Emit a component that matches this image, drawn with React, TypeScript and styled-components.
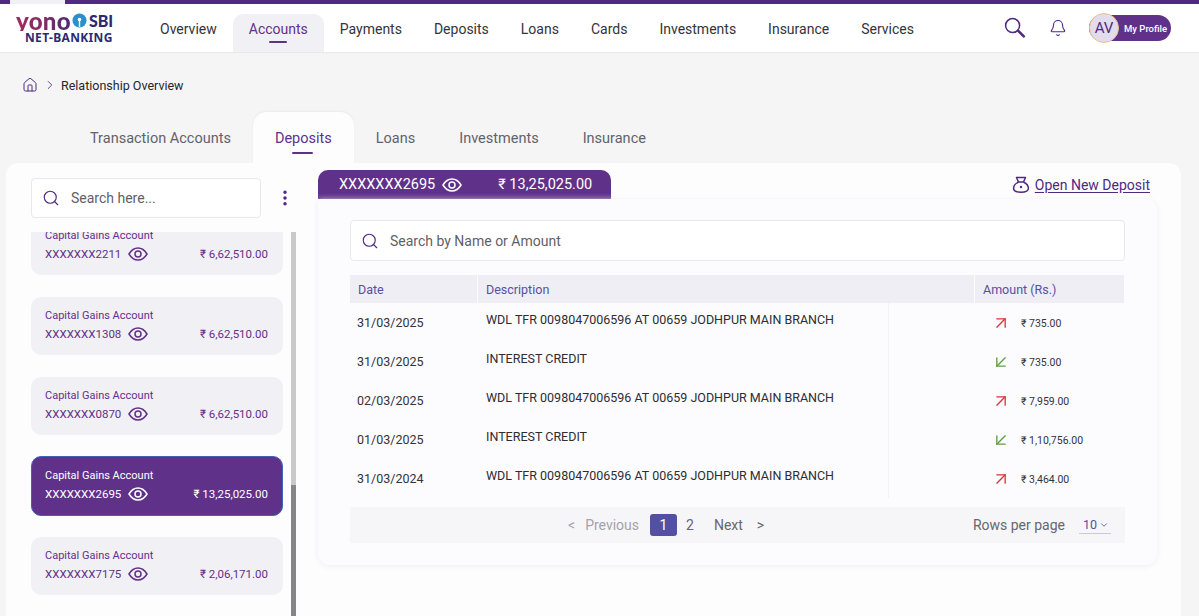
import React from "react"
import styled, { createGlobalStyle } from "styled-components"
import {
  ArrowDownLeft,
  ArrowUpRight,
  Bell,
  ChevronDown,
  ChevronRight,
  EllipsisVertical,
  House,
  Search,
} from "lucide-react"

const purple = "#5f3189"
const deepPurple = "#4f2a80"

const GlobalStyle = createGlobalStyle`
  html, body {
    margin: 0;
    height: 100%;
    overflow: hidden;
    background: #f5f5f6;
    font-family: Roboto, "Noto Sans", sans-serif;
    color: #2b2b33;
  }
  * { box-sizing: border-box; }
`

const Page = styled.div`
  height: 100vh;
  display: flex;
  flex-direction: column;
  overflow: hidden;
`

const TopStrip = styled.div`
  height: 4px;
  flex: none;
  background: ${deepPurple};
  padding-left: 10px;

  &::before {
    content: "";
    display: block;
    width: 55px;
    height: 4px;
    background: #f1f0f4;
  }
`

const Header = styled.header`
  height: 48px;
  flex: none;
  display: flex;
  align-items: flex-end;
  background: #fff;
  padding: 0 28px 0 16px;
  box-shadow: 0 1px 1px #e9e9ec;
`

const Logo = styled.div`
  width: 128px;
  align-self: center;
  display: flex;
  flex-direction: column;
  margin-top: -1px;
`

const LogoTop = styled.div`
  display: flex;
  align-items: center;
  height: 21px;
`

const Yono = styled.span`
  font-family: Lato, sans-serif;
  font-weight: 900;
  font-size: 24px;
  line-height: 21px;
  letter-spacing: 0.3px;
  background: linear-gradient(90deg, #a12c5c 0%, #7d2c68 55%, #4a2a78 100%);
  -webkit-background-clip: text;
  background-clip: text;
  color: transparent;
`

const Sbi = styled.span`
  font-family: Lato, sans-serif;
  font-weight: 900;
  font-size: 16px;
  color: #2c2a72;
  margin-left: 1px;
`

const NetBanking = styled.span`
  font-family: "Noto Sans", sans-serif;
  font-weight: 700;
  font-size: 12px;
  line-height: 14px;
  letter-spacing: 0.35px;
  color: #2c2a72;
  margin-left: 9px;
`

const Nav = styled.nav`
  display: flex;
  height: 38px;
`

const NavItem = styled.a<{ $active?: boolean }>`
  position: relative;
  display: flex;
  align-items: center;
  padding: 0 16px 8px;
  font-size: 14px;
  color: ${(p) => (p.$active ? purple : "#33333b")};
  background: ${(p) => (p.$active ? "#f1f0f5" : "transparent")};
  border-radius: 10px 10px 0 0;

  ${(p) =>
    p.$active &&
    `&::after {
      content: "";
      position: absolute;
      left: 36px;
      bottom: 9px;
      width: 18px;
      height: 2px;
      border-radius: 1px;
      background: ${purple};
    }`}
`

const HeaderTools = styled.div`
  margin-left: auto;
  align-self: center;
  display: flex;
  align-items: center;
`

const BellIcon = styled(Bell)`
  margin-left: 23px;
  color: ${deepPurple};
`

const Profile = styled.div`
  margin-left: 22px;
  display: flex;
  align-items: center;
  width: 82px;
  height: 26px;
  border-radius: 13px;
  background: ${purple};
`

const Avatar = styled.div`
  width: 30px;
  height: 30px;
  flex: none;
  border-radius: 50%;
  border: 1px solid #e3c48f;
  background: #e2dcec;
  color: ${deepPurple};
  font-size: 15px;
  display: flex;
  align-items: center;
  justify-content: center;
`

const ProfileLabel = styled.span`
  margin-left: 5px;
  font-size: 9.5px;
  font-weight: 500;
  color: #fff;
  white-space: nowrap;
`

const Breadcrumb = styled.div`
  height: 60px;
  flex: none;
  display: flex;
  align-items: center;
  padding: 6px 0 0 22px;
  font-size: 12.5px;
  color: #26262c;
`

const Crumb = styled.span`
  margin-left: 4px;
`

const TabBar = styled.div`
  display: flex;
  height: 51px;
  flex: none;
  padding-left: 68px;
`

const Tab = styled.a<{ $active?: boolean }>`
  position: relative;
  display: flex;
  align-items: center;
  padding: 2px 22px 0;
  font-size: 14.5px;
  color: ${(p) => (p.$active ? purple : "#62626a")};
  background: ${(p) => (p.$active ? "#fdfdfe" : "transparent")};
  border-radius: 14px 14px 0 0;
  box-shadow: ${(p) => (p.$active ? "0 -1px 2px #ebebee" : "none")};

  ${(p) =>
    p.$active &&
    `&::after {
      content: "";
      position: absolute;
      left: 39px;
      bottom: 9px;
      width: 21px;
      height: 2px;
      border-radius: 1px;
      background: ${purple};
    }`}
`

const Panel = styled.main`
  flex: 1;
  min-height: 0;
  margin: 0 18px 0 6px;
  background: #fdfdfe;
  border-radius: 12px 12px 0 0;
  display: flex;
`

const Sidebar = styled.aside`
  width: 312px;
  flex: none;
  display: flex;
  flex-direction: column;
  padding: 15px 0 0 25px;
`

const SearchRow = styled.div`
  display: flex;
  align-items: center;
  height: 40px;
  flex: none;
`

const SearchBox = styled.div<{ $wide?: boolean }>`
  display: flex;
  align-items: center;
  height: ${(p) => (p.$wide ? "41px" : "40px")};
  width: ${(p) => (p.$wide ? "775px" : "230px")};
  padding-left: 10px;
  background: #fff;
  border: 1px solid #e8e8ee;
  border-radius: 4px;
  font-size: 14px;
  color: #5f5f66;
`

const SearchText = styled.span`
  margin-left: 11px;
`

const SearchGlyph = styled(Search)`
  color: ${deepPurple};
  flex: none;
`

const MoreIcon = styled(EllipsisVertical)`
  margin-left: 14px;
  color: ${deepPurple};
`

const ListArea = styled.div`
  flex: 1;
  min-height: 0;
  display: flex;
  margin-top: 14px;
`

const ListClip = styled.div`
  width: 252px;
  flex: none;
  overflow: hidden;
`

const CardList = styled.div`
  display: flex;
  flex-direction: column;
  gap: 22px;
  margin-top: -15px;
`

const AccountCard = styled.div<{ $active?: boolean }>`
  height: ${(p) => (p.$active ? "60px" : "58px")};
  margin: ${(p) => (p.$active ? "-1px 0" : "0")};
  padding: ${(p) => (p.$active ? "12px 14px 0 13px" : "12px 15px 0 14px")};
  flex: none;
  border-radius: 10px;
  background: ${(p) => (p.$active ? purple : "#f1f0f5")};
  border: ${(p) => (p.$active ? "1.5px solid #3f63bb" : "none")};
  color: ${(p) => (p.$active ? "#fff" : purple)};
`

const CardTitle = styled.div`
  font-size: 11px;
  line-height: 13px;
`

const CardRow = styled.div`
  display: flex;
  align-items: center;
  margin-top: 4px;
  font-size: 11.5px;
  line-height: 16px;
`

const CardEye = styled.svg`
  width: 20px;
  height: 14px;
  margin-left: 7px;
`

const CardAmount = styled.span`
  margin-left: auto;
`

const ScrollTrack = styled.div`
  width: 5px;
  margin-left: 8px;
  flex: none;
  display: flex;
  flex-direction: column;
  background: #c9c9cc;
`

const ScrollThumb = styled.div`
  margin-top: 253px;
  flex: 1;
  background: #85858a;
`

const Detail = styled.section`
  width: 839px;
  flex: none;
  display: flex;
  flex-direction: column;
  padding-top: 7px;
`

const DetailTop = styled.div`
  display: flex;
  align-items: flex-start;
  height: 29px;
  flex: none;
`

const AccountTab = styled.div`
  width: 293px;
  height: 29px;
  display: flex;
  align-items: center;
  padding-left: 21px;
  background: ${purple};
  border-radius: 10px 10px 0 0;
  color: #fff;
  font-size: 14.5px;
`

const AccountTabAmount = styled.span`
  margin-left: 36px;
`

const OpenDeposit = styled.a`
  margin-left: auto;
  margin-right: 7px;
  display: flex;
  align-items: center;
  height: 29px;
  gap: 5px;
  font-size: 14px;
  color: ${deepPurple};
  text-decoration: underline;
  text-underline-offset: 2px;
`

const DetailCard = styled.div`
  height: 366px;
  flex: none;
  padding: 21px 32px 0;
  border-radius: 0 12px 12px 12px;
  background: #fcfcfe;
  box-shadow: 0 1px 6px #efeff2;
`

const TableHead = styled.div`
  margin-top: 14px;
  height: 28px;
  display: grid;
  grid-template-columns: 127px 496px 149px;
  gap: 1px;
`

const HeadCell = styled.div`
  display: flex;
  align-items: center;
  padding-left: 8px;
  background: #eeeef4;
  color: #57509f;
  font-size: 12.5px;
`

const TableRow = styled.div`
  height: 39px;
  display: grid;
  grid-template-columns: 128px 411px 86px 149px;
`

const DateCell = styled.div`
  padding: 12px 0 0 7px;
  font-size: 12.5px;
  line-height: 16px;
  color: #33333a;
`

const DescriptionCell = styled.div`
  padding: 9px 0 0 8px;
  font-size: 12.5px;
  line-height: 16px;
  color: #2d2d33;
  border-right: 1px solid #f3f3f6;
  white-space: nowrap;
`

const AmountCell = styled.div`
  grid-column: 4;
  display: flex;
  align-items: center;
  padding: 1px 0 0 16px;
  font-size: 10.5px;
  color: #33333a;
`

const AmountText = styled.span`
  margin-left: 10px;
`

const UpIcon = styled(ArrowUpRight)`
  color: #d8343b;
`

const DownIcon = styled(ArrowDownLeft)`
  color: #5f9e3f;
`

const Pager = styled.div`
  margin-top: 9px;
  height: 36px;
  display: flex;
  align-items: center;
  padding: 0 14px 0 218px;
  background: #f6f6f9;
  font-size: 14px;
  color: #66666e;
`

const PagerMuted = styled.span`
  color: #a3a3aa;
`

const PagerPrevious = styled(PagerMuted)`
  margin-left: 10px;
`

const PageBox = styled.span`
  margin-left: 11px;
  width: 27px;
  height: 22px;
  border-radius: 3px;
  background: #5350a3;
  color: #fff;
  display: flex;
  align-items: center;
  justify-content: center;
`

const PageNumber = styled.span`
  margin-left: 9px;
`

const PagerNext = styled.span`
  margin-left: 20px;
`

const PagerArrow = styled.span`
  margin-left: 14px;
`

const RowsLabel = styled.span`
  margin-left: auto;
`

const RowsSelect = styled.span`
  margin-left: 14px;
  width: 32px;
  height: 18px;
  display: flex;
  align-items: center;
  padding-left: 4px;
  gap: 2px;
  font-size: 12.5px;
  color: #57509f;
  border-bottom: 1px solid #c9c8de;
`

const EyeIcon = () => (
  <CardEye viewBox="0 0 20 14" fill="none" stroke="currentColor" strokeWidth="1.5">
    <path d="M1 7C3.4 3 6.4 1 10 1s6.6 2 9 6c-2.4 4-5.4 6-9 6S3.4 11 1 7Z" />
    <circle cx="10" cy="7" r="3" />
  </CardEye>
)

const LogoMark = () => (
  <svg width="17" height="17" viewBox="0 0 17 17">
    <circle cx="8.5" cy="8.5" r="7" fill="#2b8fcb" />
    <circle cx="8.5" cy="7.5" r="1.8" fill="#fff" />
    <rect x="7.8" y="8" width="1.4" height="7" fill="#fff" />
  </svg>
)

const LoupeIcon = () => (
  <svg width="22" height="22" viewBox="0 0 22 22" fill="none" stroke={deepPurple}>
    <circle cx="8.6" cy="8.6" r="7" strokeWidth="1.5" />
    <path d="M14 13.6l5.8 5.8" strokeWidth="2.6" strokeLinecap="round" />
  </svg>
)

const MoneyBag = () => (
  <svg width="18" height="18" viewBox="0 0 18 18" fill="none" stroke={deepPurple} strokeWidth="1.5">
    <path d="M4.5 1.5h9L11.5 6h-5L4.5 1.5Z" strokeLinejoin="round" />
    <path d="M6.5 6C3.5 7.5 1.6 9.8 1.6 12.3c0 2.6 2.4 4 7.4 4s7.4-1.4 7.4-4C16.400 9.800 14.500 7.500 11.500 6" />
    <circle cx="9" cy="11" r="1.2" fill={deepPurple} stroke="none" />
  </svg>
)

const navItems = ["Overview", "Accounts", "Payments", "Deposits", "Loans", "Cards", "Investments", "Insurance", "Services"]
const tabs = ["Transaction Accounts", "Deposits", "Loans", "Investments", "Insurance"]

const accounts = [
  { number: "XXXXXXX2211", amount: "₹ 6,62,510.00" },
  { number: "XXXXXXX1308", amount: "₹ 6,62,510.00" },
  { number: "XXXXXXX0870", amount: "₹ 6,62,510.00" },
  { number: "XXXXXXX2695", amount: "₹ 13,25,025.00", active: true },
  { number: "XXXXXXX7175", amount: "₹ 2,06,171.00" },
]

const withdrawal = "WDL TFR 0098047006596 AT 00659 JODHPUR MAIN BRANCH"

const rows = [
  { date: "31/03/2025", text: withdrawal, amount: "₹ 735.00", out: true },
  { date: "31/03/2025", text: "INTEREST CREDIT", amount: "₹ 735.00", out: false },
  { date: "02/03/2025", text: withdrawal, amount: "₹ 7,959.00", out: true },
  { date: "01/03/2025", text: "INTEREST CREDIT", amount: "₹ 1,10,756.00", out: false },
  { date: "31/03/2024", text: withdrawal, amount: "₹ 3,464.00", out: true },
]

const App: React.FC = () => {
  return (
    <Page>
      <GlobalStyle />
      <TopStrip />
      <Header>
        <Logo>
          <LogoTop>
            <Yono>yono</Yono>
            <LogoMark />
            <Sbi>SBI</Sbi>
          </LogoTop>
          <NetBanking>NET-BANKING</NetBanking>
        </Logo>
        <Nav>
          {navItems.map((item) => (
            <NavItem key={item} $active={item === "Accounts"}>
              {item}
            </NavItem>
          ))}
        </Nav>
        <HeaderTools>
          <LoupeIcon />
          <BellIcon size={18} strokeWidth={1.5} />
          <Profile>
            <Avatar>AV</Avatar>
            <ProfileLabel>My Profile</ProfileLabel>
          </Profile>
        </HeaderTools>
      </Header>

      <Breadcrumb>
        <House size={16} strokeWidth={1.5} color={deepPurple} />
        <ChevronRight size={14} strokeWidth={1.5} color={deepPurple} style={{ marginLeft: 5 }} />
        <Crumb>Relationship Overview</Crumb>
      </Breadcrumb>

      <TabBar>
        {tabs.map((tab) => (
          <Tab key={tab} $active={tab === "Deposits"}>
            {tab}
          </Tab>
        ))}
      </TabBar>

      <Panel>
        <Sidebar>
          <SearchRow>
            <SearchBox>
              <SearchGlyph size={18} strokeWidth={1.5} />
              <SearchText>Search here...</SearchText>
            </SearchBox>
            <MoreIcon size={20} strokeWidth={2.2} />
          </SearchRow>
          <ListArea>
            <ListClip>
              <CardList>
                {accounts.map((account) => (
                  <AccountCard key={account.number} $active={account.active}>
                    <CardTitle>Capital Gains Account</CardTitle>
                    <CardRow>
                      {account.number}
                      <EyeIcon />
                      <CardAmount>{account.amount}</CardAmount>
                    </CardRow>
                  </AccountCard>
                ))}
              </CardList>
            </ListClip>
            <ScrollTrack>
              <ScrollThumb />
            </ScrollTrack>
          </ListArea>
        </Sidebar>

        <Detail>
          <DetailTop>
            <AccountTab>
              XXXXXXX2695
              <EyeIcon />
              <AccountTabAmount>₹ 13,25,025.00</AccountTabAmount>
            </AccountTab>
            <OpenDeposit>
              <MoneyBag />
              Open New Deposit
            </OpenDeposit>
          </DetailTop>
          <DetailCard>
            <SearchBox $wide>
              <SearchGlyph size={18} strokeWidth={1.5} />
              <SearchText>Search by Name or Amount</SearchText>
            </SearchBox>
            <TableHead>
              <HeadCell>Date</HeadCell>
              <HeadCell>Description</HeadCell>
              <HeadCell>Amount (Rs.)</HeadCell>
            </TableHead>
            {rows.map((row, i) => (
              <TableRow key={i}>
                <DateCell>{row.date}</DateCell>
                <DescriptionCell>{row.text}</DescriptionCell>
                <AmountCell>
                  {row.out ? <UpIcon size={20} strokeWidth={1.6} /> : <DownIcon size={20} strokeWidth={1.6} />}
                  <AmountText>{row.amount}</AmountText>
                </AmountCell>
              </TableRow>
            ))}
            <Pager>
              <PagerMuted>&lt;</PagerMuted>
              <PagerPrevious>Previous</PagerPrevious>
              <PageBox>1</PageBox>
              <PageNumber>2</PageNumber>
              <PagerNext>Next</PagerNext>
              <PagerArrow>&gt;</PagerArrow>
              <RowsLabel>Rows per page</RowsLabel>
              <RowsSelect>
                10
                <ChevronDown size={10} />
              </RowsSelect>
            </Pager>
          </DetailCard>
        </Detail>
      </Panel>
    </Page>
  )
}

export default App
